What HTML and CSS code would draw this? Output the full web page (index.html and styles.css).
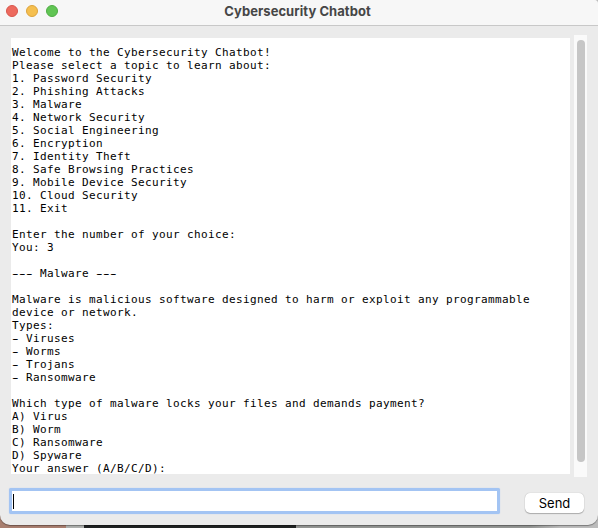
FILE: index.html
```html
<!DOCTYPE html>
<html lang="en">
<head>
<meta charset="utf-8">
<title>Cybersecurity Chatbot</title>
<link rel="stylesheet" href="styles.css">
</head>
<body>
<main class="window">
<header class="titlebar">
<div class="lights"><span class="light red"></span><span class="light yellow"></span><span class="light green"></span></div>
<h1 class="title">Cybersecurity Chatbot</h1>
</header>
<section class="chat">
<pre class="log">Welcome to the Cybersecurity Chatbot!
Please select a topic to learn about:
1. Password Security
2. Phishing Attacks
3. Malware
4. Network Security
5. Social Engineering
6. Encryption
7. Identity Theft
8. Safe Browsing Practices
9. Mobile Device Security
10. Cloud Security
11. Exit

Enter the number of your choice:
You: 3

<span class="dash">---</span> Malware <span class="dash">---</span>

Malware is malicious software designed to harm or exploit any programmable
device or network.
Types:
<span class="dash">-</span> Viruses
<span class="dash">-</span> Worms
<span class="dash">-</span> Trojans
<span class="dash">-</span> Ransomware

Which type of malware locks your files and demands payment?
A) Virus
B) Worm
C) Ransomware
D) Spyware
Your answer (A/B/C/D):</pre>
<div class="scrollbar"><div class="thumb"></div></div>
</section>
<footer class="composer">
<div class="entry"><span class="caret"></span></div>
<button class="send" type="button">Send</button>
</footer>
</main>
</body>
</html>
```
FILE: styles.css
```css
* { box-sizing: border-box; }
html { height: 100%; }
body {
  margin: 0;
  height: 528px;
  overflow: hidden;
  background: linear-gradient(90deg, #a97f70 0 66px, #aeb0ae 66px 84px, #202323 84px 296px, #939593 296px 530px, #bcbcbc 560px);
}
.window {
  display: flex;
  flex-direction: column;
  height: 525px;
  background: #ebebeb;
  border-radius: 0 4px 10px 10px;
  box-shadow: 0 1px 1px rgba(0, 0, 0, .35);
  overflow: hidden;
}
.titlebar {
  display: grid;
  grid-template-columns: 70px 1fr 73px;
  flex: none;
  height: 26px;
  background: #f7f7f7;
  border-bottom: 1px solid #c8c8c8;
}
.lights { display: flex; gap: 8px; padding: 5px 0 0 6px; }
.light { width: 12px; height: 12px; border-radius: 50%; border: 1px solid; }
.red { background: #ed6a5e; border-color: #d9564c; }
.yellow { background: #f5bf4f; border-color: #dda43c; }
.green { background: #61c554; border-color: #4fad43; }
.title {
  margin: 0;
  font: 700 13px/22px Inter, sans-serif;
  letter-spacing: .05px;
  text-align: center;
  color: #464646;
}
.chat { display: flex; flex: none; padding: 9px 0 0 11px; height: 451px; }
.log {
  margin: 3px 4px 0 0;
  padding: 8px 0 0 1px;
  width: 559px;
  height: 436px;
  background: #fff;
  color: #000;
  font: 11px/13px "DejaVu Sans Mono", monospace;
  letter-spacing: .378px;
  overflow: hidden;
}
.dash { text-shadow: 1px 0 #000, -1px 0 #000; }
.scrollbar {
  width: 13px;
  height: 442px;
  padding: 5px 2px 0 3px;
  background: #fafafa;
}
.thumb { height: 422px; border-radius: 4px; background: #c6c6c6; }
.composer { display: flex; align-items: flex-start; padding: 11px 0 0 9px; }
.entry {
  width: 491px;
  height: 26px;
  padding: 3px 1px;
  background: #fff;
  border: 3px solid #a3c4f3;
  border-radius: 2px;
  box-shadow: inset 0 0 0 1px #fff, 0 0 1px #a3c4f3;
}
.caret { display: block; width: 1px; height: 15px; background: #000; }
.send {
  width: 59px;
  height: 20px;
  margin: 5px 0 0 25px;
  padding: 0;
  border: 0;
  border-radius: 5px;
  background: #fff;
  box-shadow: 0 0 1px rgba(0, 0, 0, .3), 0 1px 1px rgba(0, 0, 0, .25);
  color: #000;
  font: 13px/20px Inter, sans-serif;
}
```
